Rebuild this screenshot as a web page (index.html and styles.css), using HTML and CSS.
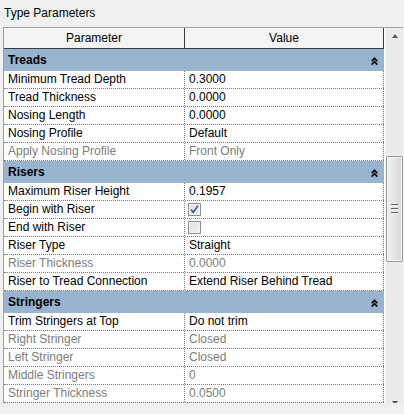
FILE: index.html
```html
<!DOCTYPE html>
<html>
<head>
<meta charset="utf-8">
<link rel="stylesheet" href="styles.css">
</head>
<body>
<div class="title">Type Parameters</div>
<div class="panel">
  <div class="grid">
    <div class="row head">
      <div class="hcell name">Parameter</div>
      <div class="hcell value">Value</div>
    </div>

    <div class="group"><span>Treads</span><svg class="chev" viewBox="0 0 7 8" width="7" height="8"><path d="M0.7 4.2 L3.5 1.2 L6.3 4.2 M0.7 7.6 L3.5 4.6 L6.3 7.6"/></svg></div>
    <div class="row"><div class="cell name">Minimum Tread Depth</div><div class="cell value">0.3000</div></div>
    <div class="row"><div class="cell name">Tread Thickness</div><div class="cell value">0.0000</div></div>
    <div class="row"><div class="cell name">Nosing Length</div><div class="cell value">0.0000</div></div>
    <div class="row"><div class="cell name">Nosing Profile</div><div class="cell value">Default</div></div>
    <div class="row off"><div class="cell name">Apply Nosing Profile</div><div class="cell value">Front Only</div></div>

    <div class="group"><span>Risers</span><svg class="chev" viewBox="0 0 7 8" width="7" height="8"><path d="M0.7 4.2 L3.5 1.2 L6.3 4.2 M0.7 7.6 L3.5 4.6 L6.3 7.6"/></svg></div>
    <div class="row"><div class="cell name">Maximum Riser Height</div><div class="cell value">0.1957</div></div>
    <div class="row"><div class="cell name">Begin with Riser</div><div class="cell value"><span class="check"><svg viewBox="0 0 9 9" width="9" height="9"><path d="M1 4.5 L3.3 7.3 L8 0.8" /></svg></span></div></div>
    <div class="row"><div class="cell name">End with Riser</div><div class="cell value"><span class="check"></span></div></div>
    <div class="row"><div class="cell name">Riser Type</div><div class="cell value">Straight</div></div>
    <div class="row off"><div class="cell name">Riser Thickness</div><div class="cell value">0.0000</div></div>
    <div class="row"><div class="cell name">Riser to Tread Connection</div><div class="cell value">Extend Riser Behind Tread</div></div>

    <div class="group"><span>Stringers</span><svg class="chev" viewBox="0 0 7 8" width="7" height="8"><path d="M0.7 4.2 L3.5 1.2 L6.3 4.2 M0.7 7.6 L3.5 4.6 L6.3 7.6"/></svg></div>
    <div class="row"><div class="cell name">Trim Stringers at Top</div><div class="cell value">Do not trim</div></div>
    <div class="row off"><div class="cell name">Right Stringer</div><div class="cell value">Closed</div></div>
    <div class="row off"><div class="cell name">Left Stringer</div><div class="cell value">Closed</div></div>
    <div class="row off"><div class="cell name">Middle Stringers</div><div class="cell value">0</div></div>
    <div class="row off"><div class="cell name">Stringer Thickness</div><div class="cell value">0.0500</div></div>
  </div>
  <div class="scrollbar">
    <div class="sbtn"><span class="arrow up"></span></div>
    <div class="track">
      <div class="thumb"><span class="grip"></span><span class="grip"></span><span class="grip"></span></div>
    </div>
    <div class="sbtn"><span class="arrow down"></span></div>
  </div>
</div>
</body>
</html>
```
FILE: styles.css
```css
html, body {
  margin: 0;
  padding: 0;
  background: #f0f0f0;
  font-family: "Liberation Sans", Arial, sans-serif;
  font-size: 12px;
  color: #000;
}
.title {
  height: 21px;
  padding: 6px 0 0 4px;
  line-height: 14px;
}
.panel {
  display: flex;
  margin-left: 3px;
  width: 399px;
  height: 375px;
  border-left: 1px solid #a0a0a0;
  border-top: 1px solid #a0a0a0;
  overflow: hidden;
  background: #fff;
}
.grid {
  width: 380px;
  flex: none;
  background: #fff;
}
.row {
  display: flex;
  height: 17px;
  border-bottom: 1px dotted #7a7a7a;
}
.row.head {
  height: 20px;
  border-bottom: 1px solid #3c3c3c;
  background: #f4f4f4;
}
.hcell {
  line-height: 20px;
  text-align: center;
  border-right: 1px solid #3c3c3c;
}
.cell {
  line-height: 17px;
  padding-left: 4px;
  border-right: 1px dotted #7a7a7a;
  white-space: nowrap;
  overflow: hidden;
}
.name { width: 180px; flex: none; }
.cell.name { width: 176px; }
.value { width: 198px; flex: none; }
.cell.value { width: 194px; display: flex; align-items: center; }
.off .cell { color: #7d7d7d; }
.group {
  display: flex;
  align-items: center;
  justify-content: space-between;
  height: 22px;
  width: 375px;
  padding-left: 4px;
  background: #99b4d1;
  font-weight: bold;
  border-right: 1px solid #99b4d1;
}
.chev {
  margin-right: 5px;
  margin-top: 1px;
}
.chev path {
  fill: none;
  stroke: #000;
  stroke-width: 1.6;
}
.check {
  display: flex;
  align-items: center;
  justify-content: center;
  width: 11px;
  height: 11px;
  margin-left: -1px;
  border: 1px solid #8e8f8f;
  background: linear-gradient(135deg, #dcdcdc, #f6f6f6);
  box-shadow: inset 0 0 0 1px #f4f4f4;
}
.check path {
  fill: none;
  stroke: #4a5c9a;
  stroke-width: 1.7;
}
.scrollbar {
  width: 17px;
  margin-left: 1px;
  display: flex;
  flex-direction: column;
  background: #ebebeb;
  border-left: 1px solid #f4f4f4;
}
.sbtn {
  height: 17px;
  display: flex;
  align-items: center;
  justify-content: center;
  flex: none;
}
.arrow {
  width: 0;
  height: 0;
  border-left: 3.5px solid transparent;
  border-right: 3.5px solid transparent;
}
.arrow.up { border-bottom: 4px solid #5a5a5a; margin-top: -1px; }
.arrow.down { border-top: 4px solid #5a5a5a; margin-top: 16px; }
.track {
  flex: 1;
  padding-top: 111px;
}
.thumb {
  height: 106px;
  margin: 0 0 0 0;
  border: 1px solid #979797;
  border-radius: 2px;
  background: linear-gradient(90deg, #f2f2f2, #e4e4e4 50%, #d6d6d6);
  box-shadow: inset 0 0 0 1px #f8f8f8;
  display: flex;
  flex-direction: column;
  align-items: center;
  justify-content: center;
  gap: 2px;
  box-sizing: border-box;
}
.grip {
  width: 7px;
  height: 1px;
  background: #5c5c5c;
  border-bottom: 1px solid #f8f8f8;
}
```
